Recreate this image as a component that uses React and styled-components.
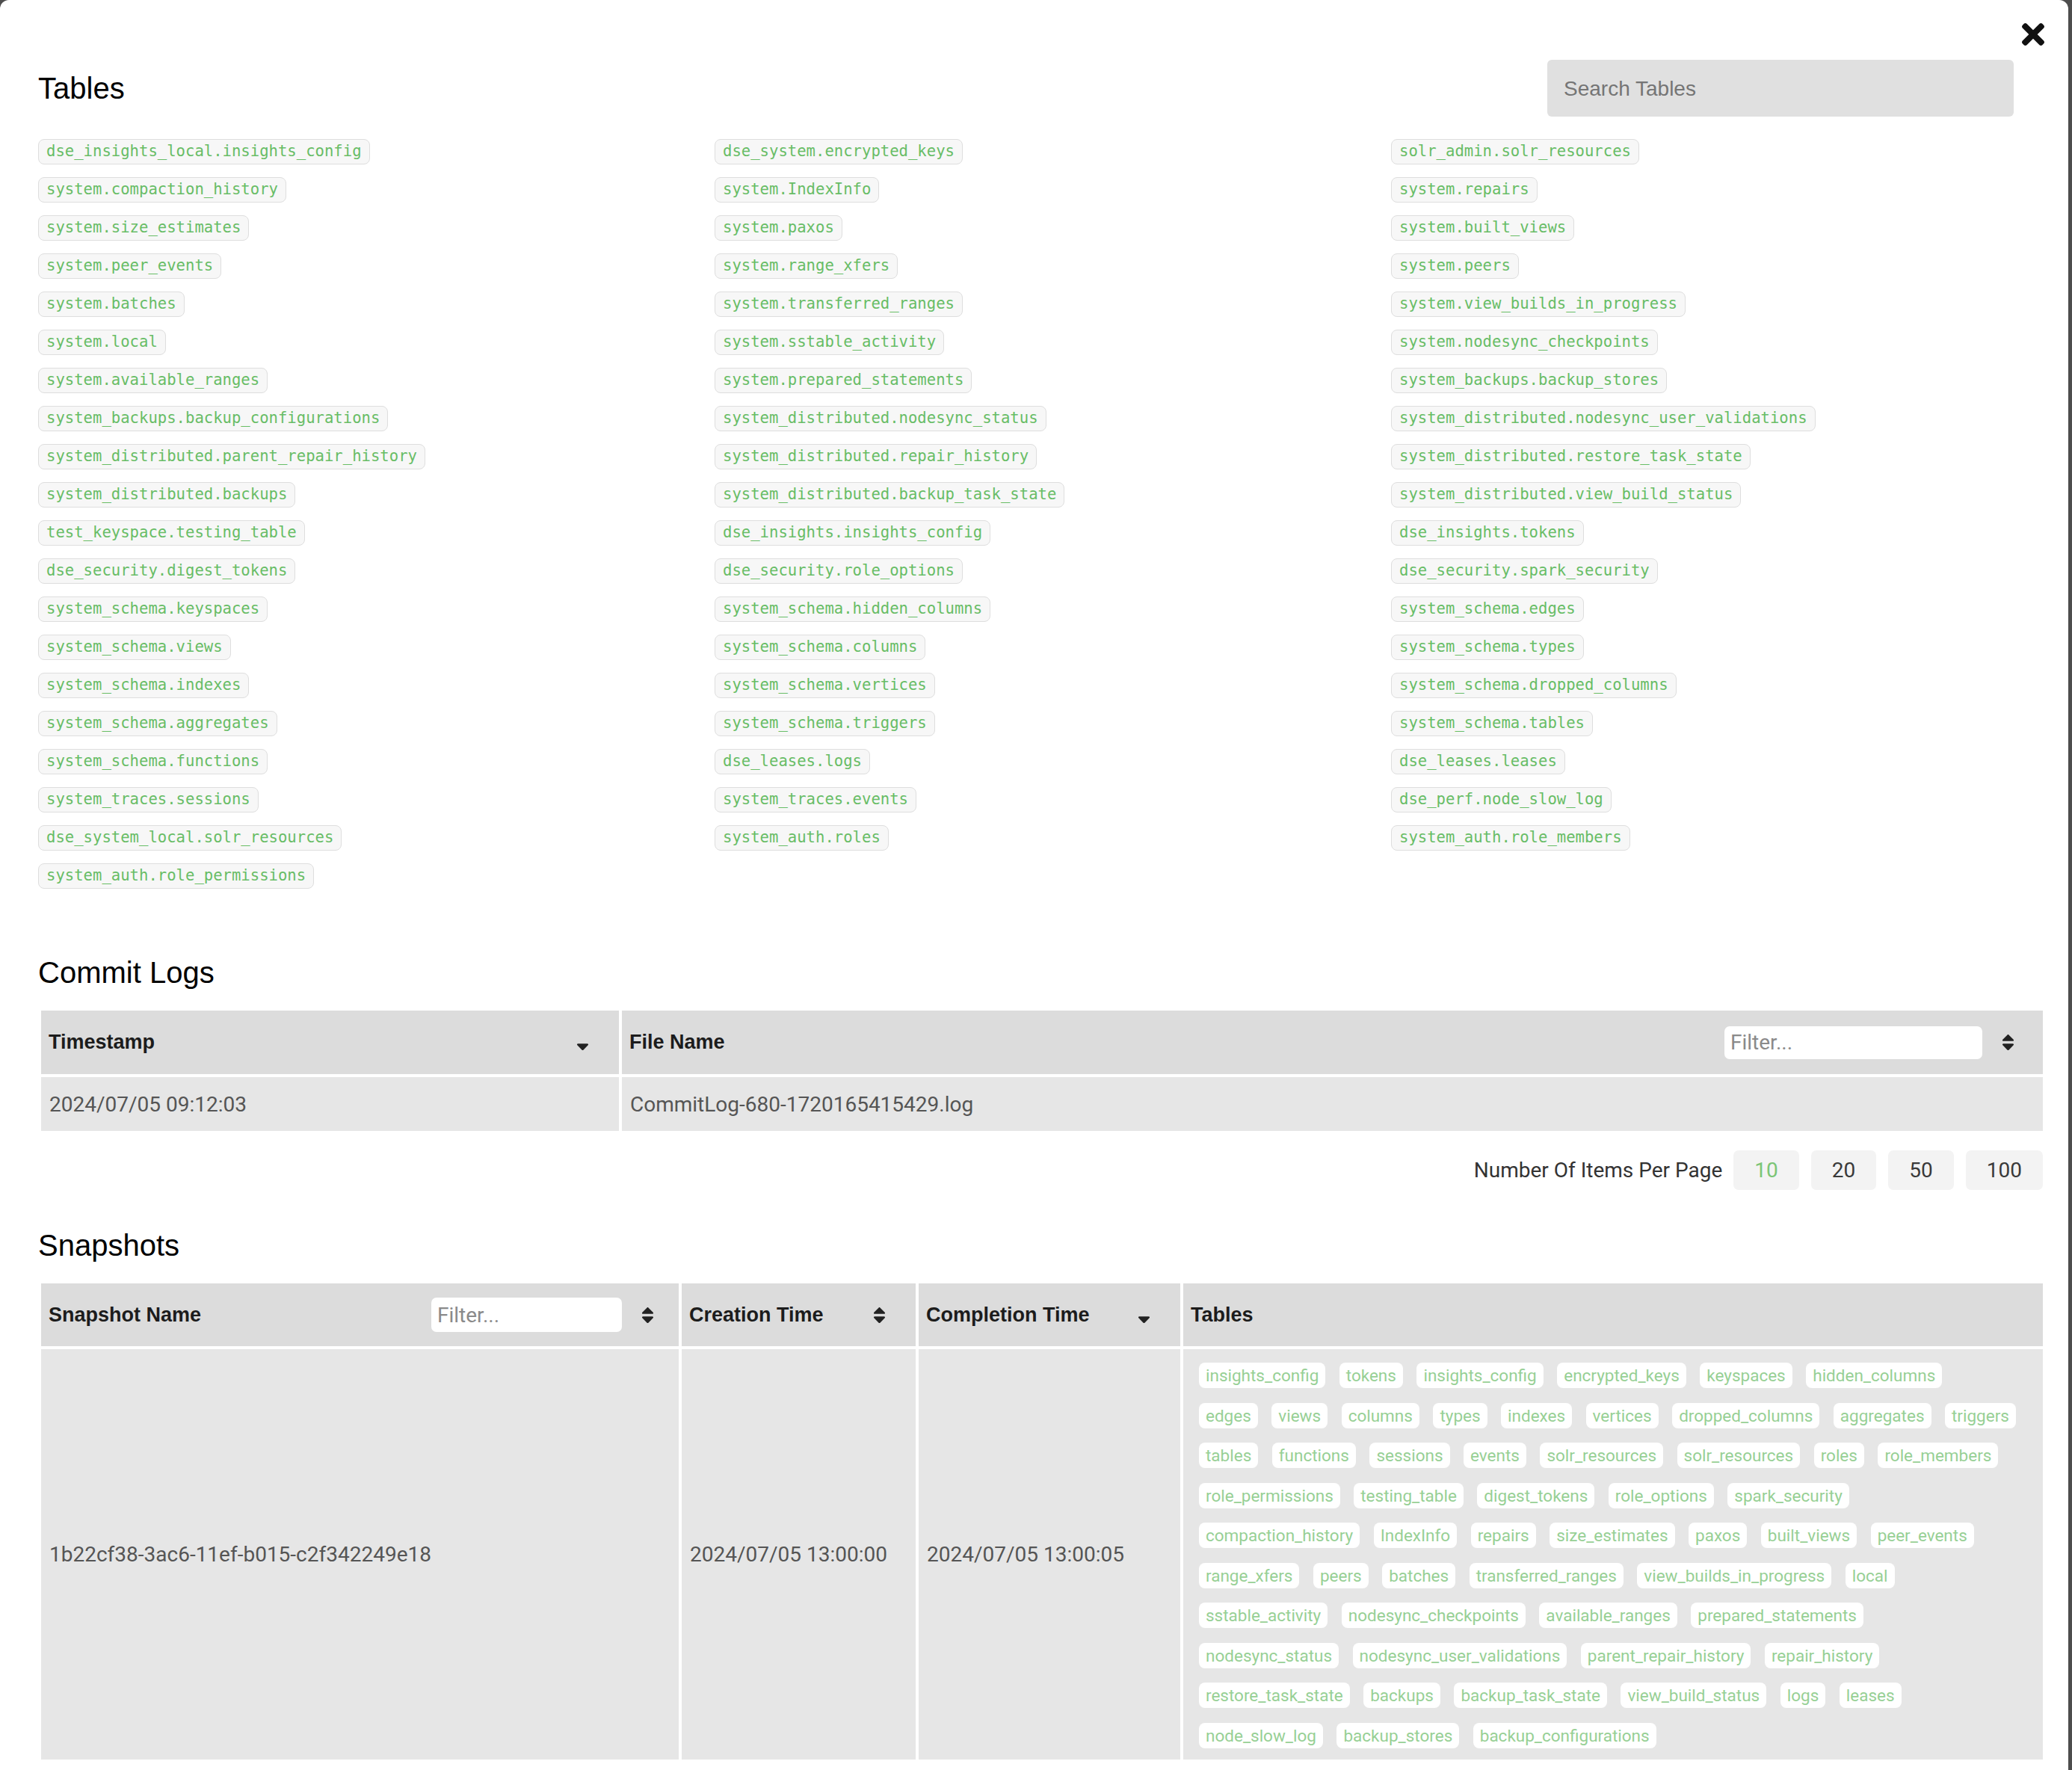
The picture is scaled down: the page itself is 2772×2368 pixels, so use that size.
import React from "react";
import styled, { createGlobalStyle } from "styled-components";

const GlobalStyle = createGlobalStyle`
  html, body {
    margin: 0;
    padding: 0;
    background: #4d4d4d;
  }
  body {
    font-family: Roboto, "Liberation Sans", sans-serif;
  }
  * { box-sizing: border-box; }
`;

const Modal = styled.div`
  width: 2767px;
  min-height: 2368px;
  background: #fff;
  border-radius: 12px 12px 0 0;
  padding: 31px 30px 40px 51px;
`;

const CloseRow = styled.div`
  display: flex;
  justify-content: flex-end;
  height: 30px;
  padding-right: 2px;
`;

const CloseButton = styled.button`
  border: none;
  background: none;
  padding: 0;
  width: 30px;
  height: 30px;
  cursor: pointer;
  svg { display: block; }
`;

const HeaderRow = styled.div`
  display: flex;
  align-items: center;
  justify-content: space-between;
  margin-top: 19px;
  height: 76px;
`;

const Heading = styled.h2`
  margin: ${(p) => p.$top || 0}px 0 0 0;
  font-family: "Liberation Sans", Arial, sans-serif;
  font-weight: 400;
  font-size: 40px;
  line-height: 46px;
  color: #000;
`;

const SearchInput = styled.input`
  width: 624px;
  height: 76px;
  margin-right: 43px;
  border: none;
  border-radius: 6px;
  background: #e0e0e0;
  padding: 2px 22px 0;
  font-family: "Liberation Sans", Arial, sans-serif;
  font-size: 28px;
  color: #333;
  outline: none;
  &::placeholder { color: #757575; }
`;

const ChipGrid = styled.div`
  display: grid;
  grid-template-columns: repeat(3, 905px);
  margin-top: 30px;
`;

const ChipColumn = styled.div`
  display: flex;
  flex-direction: column;
  align-items: flex-start;
  gap: 17px;
`;

const KeyChip = styled.span`
  display: inline-block;
  height: 34px;
  padding: 0 10px;
  border: 1.5px solid #dedede;
  border-radius: 8px;
  background: #f7f7f7;
  font-family: "DejaVu Sans Mono", "Liberation Mono", monospace;
  font-size: 20.6px;
  line-height: 31px;
  color: #68bd66;
  white-space: nowrap;
`;

const DataTable = styled.table`
  width: 2686px;
  margin-top: 24px;
  border-collapse: separate;
  border-spacing: 4px;
  table-layout: fixed;
`;

const HeadCell = styled.th`
  height: ${(p) => p.$h || 85}px;
  background: #dcdcdc;
  padding: 0 ${(p) => p.$pr || 40}px 0 10px;
  text-align: left;
  vertical-align: middle;
`;

const HeadInner = styled.div`
  display: flex;
  align-items: center;
`;

const HeadLabel = styled.span`
  flex: 1;
  font-family: "Liberation Sans", Arial, sans-serif;
  font-weight: 700;
  font-size: 27px;
  color: #1c1c1c;
  white-space: nowrap;
`;

const FilterInput = styled.input`
  width: ${(p) => p.$w}px;
  height: ${(p) => p.$h}px;
  margin-right: 26px;
  border: none;
  border-radius: 7px;
  background: #fff;
  padding: 0 8px;
  font-family: Roboto, sans-serif;
  font-size: 28px;
  color: #333;
  outline: none;
  &::placeholder { color: #8a8a8a; }
`;

const SortIcon = styled.svg`
  display: block;
  width: 17px;
  height: 27px;
  fill: #222;
  flex-shrink: 0;
`;

const BodyCell = styled.td`
  height: ${(p) => p.$h || 72}px;
  background: #e6e6e6;
  padding: 0 11px;
  vertical-align: middle;
  font-family: Roboto, sans-serif;
  font-size: 28px;
  color: #555;
  white-space: nowrap;
`;

const TablesCell = styled(BodyCell)`
  padding: 18px 11px 15px 21px;
  white-space: normal;
`;

const SnapRows = styled.div`
  display: flex;
  flex-direction: column;
  gap: 19.5px;
`;

const SnapRow = styled.div`
  display: flex;
  gap: 18.5px;
`;

const SnapChip = styled.span`
  height: 34px;
  padding: 0 9px;
  border-radius: 8px;
  background: #fff;
  font-family: Roboto, sans-serif;
  font-size: 22.5px;
  line-height: 34px;
  color: #97d095;
  white-space: nowrap;
`;

const Pager = styled.div`
  display: flex;
  justify-content: flex-end;
  align-items: center;
  gap: 16px;
  margin-top: 22px;
  padding-right: 4px;
`;

const PagerLabel = styled.span`
  font-family: Roboto, sans-serif;
  font-size: 28px;
  color: #333;
  margin-right: -1px;
`;

const PageButton = styled.button`
  height: 53px;
  padding: 0 28px;
  border: none;
  border-radius: 7px;
  background: #f3f3f3;
  font-family: Roboto, sans-serif;
  font-size: 28px;
  color: ${(p) => (p.$active ? "#7cc576" : "#3a3a3a")};
`;

const Sort = ({ down }) => (
  <SortIcon viewBox="0 0 320 512">
    {!down && (
      <path d="M296 183L177 64c-9.4-9.4-24.6-9.4-33.9 0L24 183c-15.1 15.1-4.4 41 17 41h238c21.4 0 32.1-25.9 17-41z" />
    )}
    <path d="M41 288h238c21.4 0 32.1 25.9 17 41L177 448c-9.4 9.4-24.6 9.4-33.9 0L24 329c-15.1-15.1-4.4-41 17-41z" />
  </SortIcon>
);

const CloseIcon = () => (
  <svg width="30" height="30" viewBox="0 80 352 352" fill="#111">
    <path d="M242.72 256l100.07-100.07c12.28-12.28 12.28-32.19 0-44.48l-22.24-22.24c-12.28-12.28-32.19-12.28-44.48 0L176 189.28 75.93 89.21c-12.28-12.28-32.19-12.28-44.48 0L9.21 111.45c-12.28 12.28-12.28 32.19 0 44.48L109.28 256 9.21 356.07c-12.28 12.28-12.28 32.19 0 44.48l22.24 22.24c12.28 12.28 32.2 12.28 44.48 0L176 322.72l100.07 100.07c12.28 12.28 32.2 12.28 44.48 0l22.24-22.24c12.28-12.28 12.28-32.19 0-44.48L242.72 256z" />
  </svg>
);

const tableColumns = [
  [
    "dse_insights_local.insights_config",
    "system.compaction_history",
    "system.size_estimates",
    "system.peer_events",
    "system.batches",
    "system.local",
    "system.available_ranges",
    "system_backups.backup_configurations",
    "system_distributed.parent_repair_history",
    "system_distributed.backups",
    "test_keyspace.testing_table",
    "dse_security.digest_tokens",
    "system_schema.keyspaces",
    "system_schema.views",
    "system_schema.indexes",
    "system_schema.aggregates",
    "system_schema.functions",
    "system_traces.sessions",
    "dse_system_local.solr_resources",
    "system_auth.role_permissions",
  ],
  [
    "dse_system.encrypted_keys",
    "system.IndexInfo",
    "system.paxos",
    "system.range_xfers",
    "system.transferred_ranges",
    "system.sstable_activity",
    "system.prepared_statements",
    "system_distributed.nodesync_status",
    "system_distributed.repair_history",
    "system_distributed.backup_task_state",
    "dse_insights.insights_config",
    "dse_security.role_options",
    "system_schema.hidden_columns",
    "system_schema.columns",
    "system_schema.vertices",
    "system_schema.triggers",
    "dse_leases.logs",
    "system_traces.events",
    "system_auth.roles",
  ],
  [
    "solr_admin.solr_resources",
    "system.repairs",
    "system.built_views",
    "system.peers",
    "system.view_builds_in_progress",
    "system.nodesync_checkpoints",
    "system_backups.backup_stores",
    "system_distributed.nodesync_user_validations",
    "system_distributed.restore_task_state",
    "system_distributed.view_build_status",
    "dse_insights.tokens",
    "dse_security.spark_security",
    "system_schema.edges",
    "system_schema.types",
    "system_schema.dropped_columns",
    "system_schema.tables",
    "dse_leases.leases",
    "dse_perf.node_slow_log",
    "system_auth.role_members",
  ],
];

const snapshotTables = [
  ["insights_config", "tokens", "insights_config", "encrypted_keys", "keyspaces", "hidden_columns"],
  ["edges", "views", "columns", "types", "indexes", "vertices", "dropped_columns", "aggregates", "triggers"],
  ["tables", "functions", "sessions", "events", "solr_resources", "solr_resources", "roles", "role_members"],
  ["role_permissions", "testing_table", "digest_tokens", "role_options", "spark_security"],
  ["compaction_history", "IndexInfo", "repairs", "size_estimates", "paxos", "built_views", "peer_events"],
  ["range_xfers", "peers", "batches", "transferred_ranges", "view_builds_in_progress", "local"],
  ["sstable_activity", "nodesync_checkpoints", "available_ranges", "prepared_statements"],
  ["nodesync_status", "nodesync_user_validations", "parent_repair_history", "repair_history"],
  ["restore_task_state", "backups", "backup_task_state", "view_build_status", "logs", "leases"],
  ["node_slow_log", "backup_stores", "backup_configurations"],
];

export default function App() {
  return (
    <>
      <GlobalStyle />
      <Modal>
        <CloseRow>
          <CloseButton aria-label="close">
            <CloseIcon />
          </CloseButton>
        </CloseRow>

        <HeaderRow>
          <Heading>Tables</Heading>
          <SearchInput placeholder="Search Tables" />
        </HeaderRow>

        <ChipGrid>
          {tableColumns.map((col, i) => (
            <ChipColumn key={i}>
              {col.map((name) => (
                <KeyChip key={name}>{name}</KeyChip>
              ))}
            </ChipColumn>
          ))}
        </ChipGrid>

        <Heading $top={89}>Commit Logs</Heading>
        <DataTable>
          <colgroup>
            <col style={{ width: 773 }} />
            <col style={{ width: 1901 }} />
          </colgroup>
          <thead>
            <tr>
              <HeadCell>
                <HeadInner>
                  <HeadLabel>Timestamp</HeadLabel>
                  <Sort down />
                </HeadInner>
              </HeadCell>
              <HeadCell $pr={38}>
                <HeadInner>
                  <HeadLabel>File Name</HeadLabel>
                  <FilterInput $w={345} $h={44} placeholder="Filter..." />
                  <Sort />
                </HeadInner>
              </HeadCell>
            </tr>
          </thead>
          <tbody>
            <tr>
              <BodyCell>2024/07/05 09:12:03</BodyCell>
              <BodyCell>CommitLog-680-1720165415429.log</BodyCell>
            </tr>
          </tbody>
        </DataTable>

        <Pager>
          <PagerLabel>Number Of Items Per Page</PagerLabel>
          <PageButton $active>10</PageButton>
          <PageButton>20</PageButton>
          <PageButton>50</PageButton>
          <PageButton>100</PageButton>
        </Pager>

        <Heading $top={51}>Snapshots</Heading>
        <DataTable>
          <colgroup>
            <col style={{ width: 853 }} />
            <col style={{ width: 313 }} />
            <col style={{ width: 350 }} />
            <col style={{ width: 1150 }} />
          </colgroup>
          <thead>
            <tr>
              <HeadCell $h={84} $pr={33}>
                <HeadInner>
                  <HeadLabel>Snapshot Name</HeadLabel>
                  <FilterInput $w={255} $h={46} placeholder="Filter..." />
                  <Sort />
                </HeadInner>
              </HeadCell>
              <HeadCell $h={84}>
                <HeadInner>
                  <HeadLabel>Creation Time</HeadLabel>
                  <Sort />
                </HeadInner>
              </HeadCell>
              <HeadCell $h={84}>
                <HeadInner>
                  <HeadLabel>Completion Time</HeadLabel>
                  <Sort down />
                </HeadInner>
              </HeadCell>
              <HeadCell $h={84}>
                <HeadInner>
                  <HeadLabel>Tables</HeadLabel>
                </HeadInner>
              </HeadCell>
            </tr>
          </thead>
          <tbody>
            <tr>
              <BodyCell>1b22cf38-3ac6-11ef-b015-c2f342249e18</BodyCell>
              <BodyCell>2024/07/05 13:00:00</BodyCell>
              <BodyCell>2024/07/05 13:00:05</BodyCell>
              <TablesCell>
                <SnapRows>
                  {snapshotTables.map((row, i) => (
                    <SnapRow key={i}>
                      {row.map((t, j) => (
                        <SnapChip key={j}>{t}</SnapChip>
                      ))}
                    </SnapRow>
                  ))}
                </SnapRows>
              </TablesCell>
            </tr>
          </tbody>
        </DataTable>
      </Modal>
    </>
  );
}
